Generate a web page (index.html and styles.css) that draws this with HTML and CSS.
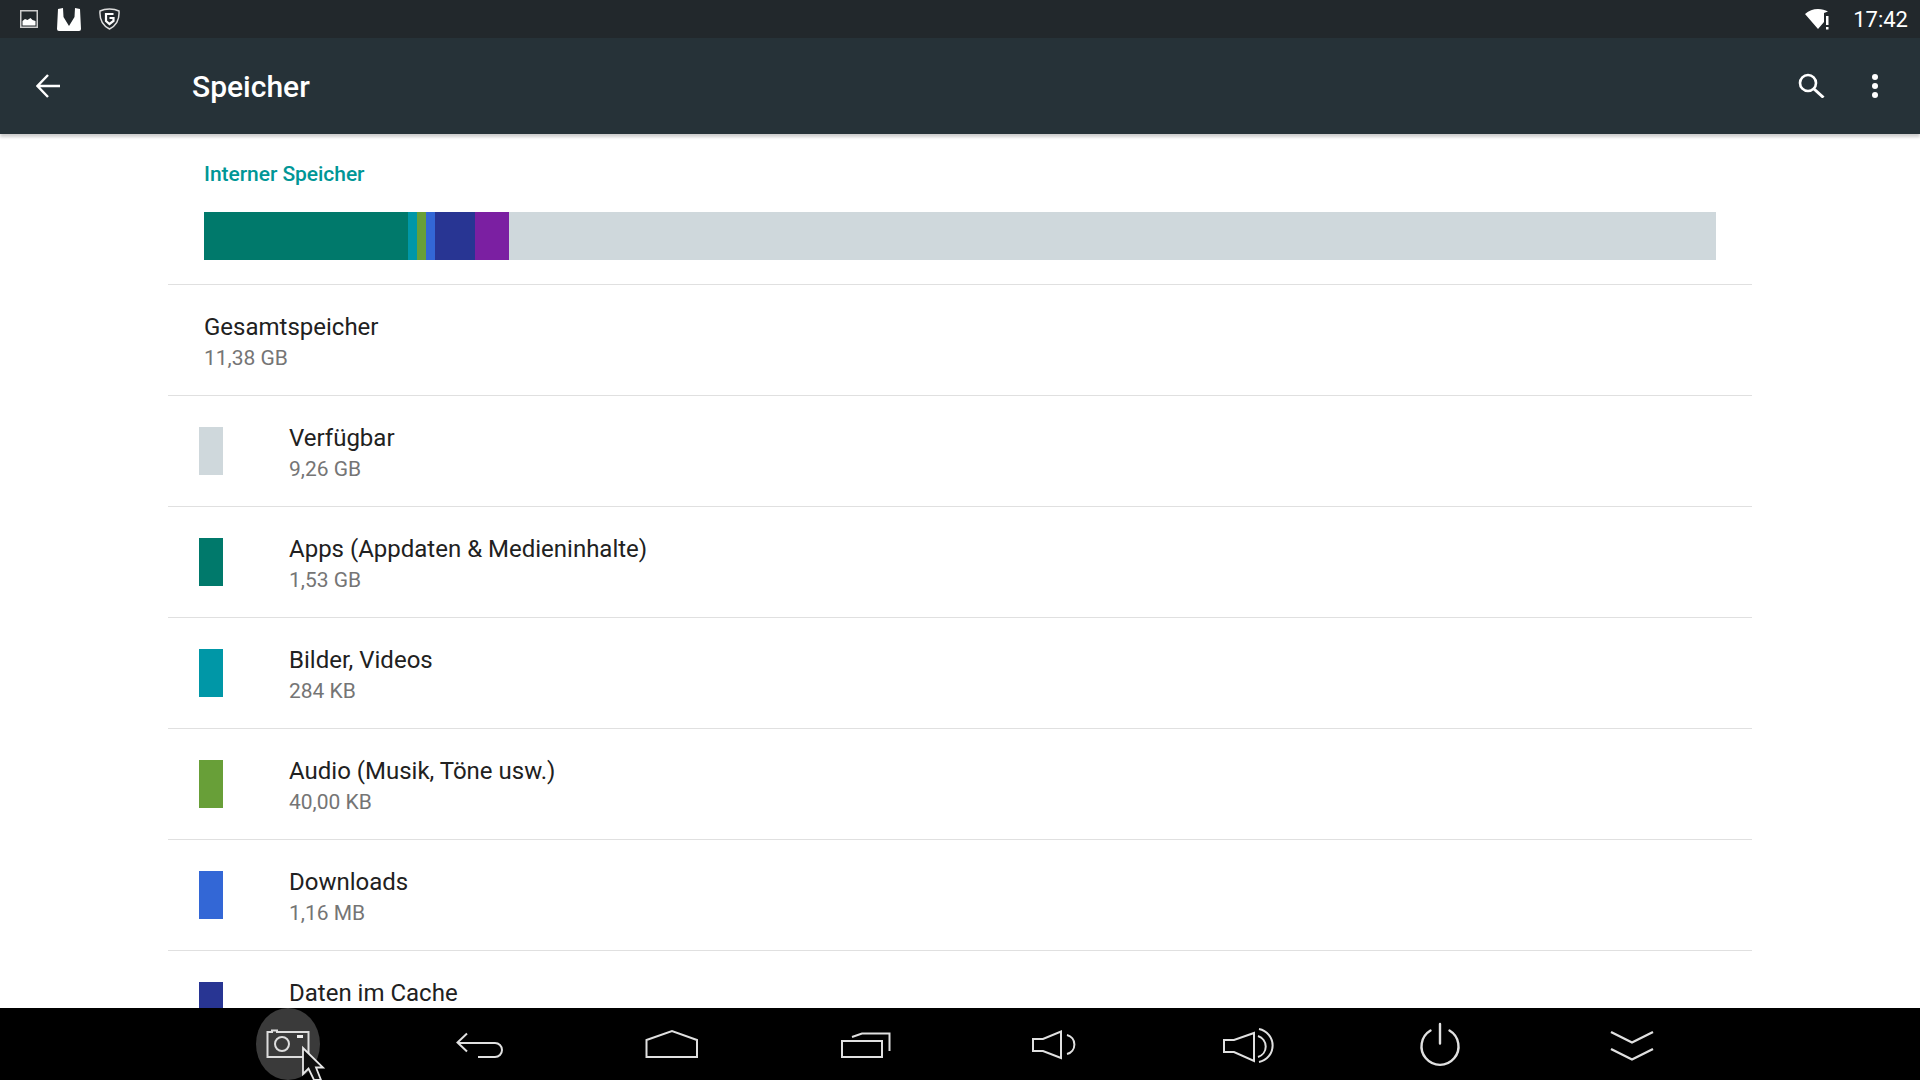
FILE: index.html
```html
<!DOCTYPE html>
<html lang="de">
<head>
<meta charset="utf-8">
<title>Speicher</title>
<link rel="stylesheet" href="styles.css">
</head>
<body>
<div class="status">
  <div class="status-left">
    <svg class="ic-image" width="18" height="18" viewBox="0 0 18 18"><rect x="0.75" y="0.75" width="16.5" height="16.5" fill="none" stroke="#ccc" stroke-width="1.5"/><path d="M2.5 15.5V11l2.5-2 2.5 1 3-2 2 2 3 1v4.500z" fill="#fff"/></svg>
    <svg class="ic-store" width="24" height="23" viewBox="0 0 24 23"><path d="M1 1 L6 0 L6.500 9 L12 18 L17.500 9 L18 0 L23 1 L24 21 Q24 23 22 23 H2 Q0 23 0 21 Z" fill="#fff"/></svg>
    <svg class="ic-shield" width="21" height="22" viewBox="0 0 21 22"><path d="M10.500 1 C14 1 17 1.500 20 3 C20.500 10 19 17 10.500 21 C2 17 .5 10 1 3 C4 1.500 7 1 10.500 1Z" fill="none" stroke="#ddd" stroke-width="1.500"/><path d="M14.500 6 H7 V13 L10.500 16 L14.500 13 V10 H10.500" fill="none" stroke="#fff" stroke-width="2.200"/></svg>
  </div>
  <div class="status-right">
    <svg class="ic-wifi" width="26" height="21" viewBox="0 0 26 21"><path d="M0 5 C4 1.500 8 0 13 0 C17 0 20 1 23 2.500 L19 4 V13 L13 20 Z" fill="#fff"/><rect x="21" y="7" width="2.500" height="9" fill="#fff"/><rect x="21" y="18" width="2.500" height="2.500" fill="#fff"/></svg>
    <span class="time">17:42</span>
  </div>
</div>
<header class="toolbar">
  <svg class="tb-back" width="24" height="24" viewBox="0 0 24 24"><path d="M12 1 L1.500 12 L12 23 M1.500 12 H24" fill="none" stroke="#fff" stroke-width="2.400"/></svg>
  <h1 class="tb-title">Speicher</h1>
  <svg class="tb-search" width="27" height="25" viewBox="0 0 27 25"><circle cx="10" cy="10" r="8" fill="none" stroke="#fff" stroke-width="2.600"/><path d="M16 16 L25.500 24.500" stroke="#fff" stroke-width="3"/></svg>
  <svg class="tb-more" width="6" height="24" viewBox="0 0 6 24"><circle cx="3" cy="3" r="3" fill="#fff"/><circle cx="3" cy="12" r="3" fill="#fff"/><circle cx="3" cy="21" r="3" fill="#fff"/></svg>
</header>
<main class="content">
  <h2 class="section">Interner Speicher</h2>
  <div class="bar">
    <span class="seg seg-apps"></span><span class="seg seg-pics"></span><span class="seg seg-audio"></span><span class="seg seg-down"></span><span class="seg seg-cache"></span><span class="seg seg-misc"></span><span class="seg seg-free"></span>
  </div>
  <div class="row row-total">
    <div class="txt"><div class="t">Gesamtspeicher</div><div class="s">11,38 GB</div></div>
  </div>
  <div class="row">
    <span class="sw c-free"></span>
    <div class="txt"><div class="t">Verfügbar</div><div class="s">9,26 GB</div></div>
  </div>
  <div class="row">
    <span class="sw c-apps"></span>
    <div class="txt"><div class="t">Apps (Appdaten &amp; Medieninhalte)</div><div class="s">1,53 GB</div></div>
  </div>
  <div class="row">
    <span class="sw c-pics"></span>
    <div class="txt"><div class="t">Bilder, Videos</div><div class="s">284 KB</div></div>
  </div>
  <div class="row">
    <span class="sw c-audio"></span>
    <div class="txt"><div class="t">Audio (Musik, Töne usw.)</div><div class="s">40,00 KB</div></div>
  </div>
  <div class="row">
    <span class="sw c-down"></span>
    <div class="txt"><div class="t">Downloads</div><div class="s">1,16 MB</div></div>
  </div>
  <div class="row">
    <span class="sw c-cache"></span>
    <div class="txt"><div class="t">Daten im Cache</div><div class="s">&nbsp;</div></div>
  </div>
</main>
<nav class="nav">
  <div class="nav-item"><svg class="nav-ic" width="64" height="72" viewBox="0 0 64 72"><ellipse cx="32" cy="36" rx="32" ry="36" fill="#3a3a3a"/><path d="M11.500 24 H16 V22.500 H21 V24 H52.500 V49 H11.500 Z" fill="none" stroke="#ddd" stroke-width="2"/><circle cx="26" cy="36" r="7" fill="none" stroke="#ddd" stroke-width="2"/><rect x="41" y="27" width="6" height="3" fill="#eee"/><path d="M47 40 V66 L52.500 60.500 L58 72 H65 L60 59.500 H67 Z" fill="#111" stroke="#e8e8e8" stroke-width="1.800"/></svg></div>
  <div class="nav-item"><svg class="nav-ic" width="64" height="72" viewBox="0 0 64 72"><path d="M19 25.500 L9.500 34.500 L19 43.500 M10 35 H47 A7 7 0 0 1 47 49 H30" fill="none" stroke="#e0e0e0" stroke-width="2"/></svg></div>
  <div class="nav-item"><svg class="nav-ic" width="64" height="72" viewBox="0 0 64 72"><path d="M6.500 49 V32 L32 23 L57 32 V49 Z" fill="none" stroke="#e0e0e0" stroke-width="2"/></svg></div>
  <div class="nav-item"><svg class="nav-ic" width="64" height="72" viewBox="0 0 64 72"><rect x="10" y="33" width="40" height="16" fill="none" stroke="#e0e0e0" stroke-width="2"/><path d="M20 29 L30 25.500 H57.500 V43" fill="none" stroke="#e0e0e0" stroke-width="2"/></svg></div>
  <div class="nav-item"><svg class="nav-ic" width="64" height="72" viewBox="0 0 64 72"><path d="M9 31 H19 L37 23.500 V50 L19 43 H9 Z" fill="none" stroke="#e0e0e0" stroke-width="2"/><path d="M43 27 A9.800 9.800 0 0 1 43 46" fill="none" stroke="#e0e0e0" stroke-width="2"/></svg></div>
  <div class="nav-item"><svg class="nav-ic" width="64" height="72" viewBox="0 0 64 72"><path d="M8 32 H18 L38 25 V53 L18 44 H8 Z" fill="none" stroke="#e0e0e0" stroke-width="2"/><path d="M42 28 A11 11 0 0 1 42 49 M43 21 A16.800 16.800 0 0 1 43 54" fill="none" stroke="#e0e0e0" stroke-width="2"/></svg></div>
  <div class="nav-item"><svg class="nav-ic" width="64" height="72" viewBox="0 0 64 72"><path d="M22.500 22.500 A18.500 18.500 0 1 0 41.500 22.500 M32 16 V35.500" fill="none" stroke="#e0e0e0" stroke-width="2.400" stroke-linecap="round"/></svg></div>
  <div class="nav-item"><svg class="nav-ic" width="64" height="72" viewBox="0 0 64 72"><path d="M11 24 L32 34.500 L53 24 M11 41 L32 51.500 L53 41" fill="none" stroke="#e0e0e0" stroke-width="2.400"/></svg></div>
</nav>
</body>
</html>
```
FILE: styles.css
```css
* { box-sizing: border-box; }
html, body { margin: 0; padding: 0; height: 100%; overflow: hidden; }
body {
  display: flex;
  flex-direction: column;
  height: 1080px;
  background: #fff;
  font-family: Roboto, "Noto Sans", sans-serif;
}
.status {
  flex: 0 0 38px;
  background: #22282c;
  display: flex;
  justify-content: space-between;
  align-items: center;
}
.status-left { display: flex; align-items: center; padding-left: 20px; }
.ic-store { margin-left: 19px; }
.ic-shield { margin-left: 18px; }
.status-right { display: flex; align-items: center; padding-right: 12px; }
.time { margin-left: 22px; color: #fff; font-size: 22px; font-weight: 400; }
.toolbar {
  flex: 0 0 96px;
  background: #263238;
  display: flex;
  align-items: center;
  padding-left: 36px;
  position: relative;
  z-index: 2;
  box-shadow: 0 3px 3px rgba(0, 0, 0, .2);
}
.tb-title {
  margin: 0 0 0 132px;
  flex: 1;
  color: #fff;
  font-size: 30px;
  font-weight: 500;
}
.tb-search { margin: 0 47px 2px 0; }
.tb-more { margin-right: 42px; }
.content {
  flex: 1;
  overflow: hidden;
  padding: 0 168px;
  min-height: 0;
}
.section {
  margin: 28px 0 0 36px;
  font-size: 21px;
  line-height: 24px;
  font-weight: 500;
  letter-spacing: -.05px;
  color: #009696;
}
.bar {
  display: flex;
  margin: 26px 36px 0;
  height: 48px;
}
.seg { display: block; height: 48px; }
.seg-apps { width: 204px; background: #00796b; }
.seg-pics { width: 9px; background: #0097a7; }
.seg-audio { width: 9px; background: #689f38; }
.seg-down { width: 9px; background: #3367d6; }
.seg-cache { width: 40px; background: #283593; }
.seg-misc { width: 34px; background: #7b1fa2; }
.seg-free { flex: 1; background: #cfd8dc; }
.row {
  height: 111px;
  display: flex;
  align-items: center;
  padding-left: 31px;
  border-top: 1px solid #e0e0e0;
  flex: none;
}
.row-total { margin-top: 24px; padding-left: 36px; }
.sw { flex: none; width: 24px; height: 48px; margin-right: 66px; }
.c-free { background: #cfd8dc; }
.c-apps { background: #00796b; }
.c-pics { background: #0097a7; }
.c-audio { background: #689f38; }
.c-down { background: #3367d6; }
.c-cache { background: #283593; }
.txt { padding-top: 4px; }
.t { font-size: 24px; line-height: 31px; color: #212121; white-space: nowrap; }
.s { font-size: 21px; line-height: 30px; color: #757575; white-space: nowrap; }
.nav {
  flex: 0 0 72px;
  background: #000;
  display: flex;
  justify-content: center;
  position: relative;
  z-index: 3;
}
.nav-item {
  width: 192px;
  height: 72px;
  display: flex;
  justify-content: center;
}
.nav-ic { display: block; overflow: visible; }
```
